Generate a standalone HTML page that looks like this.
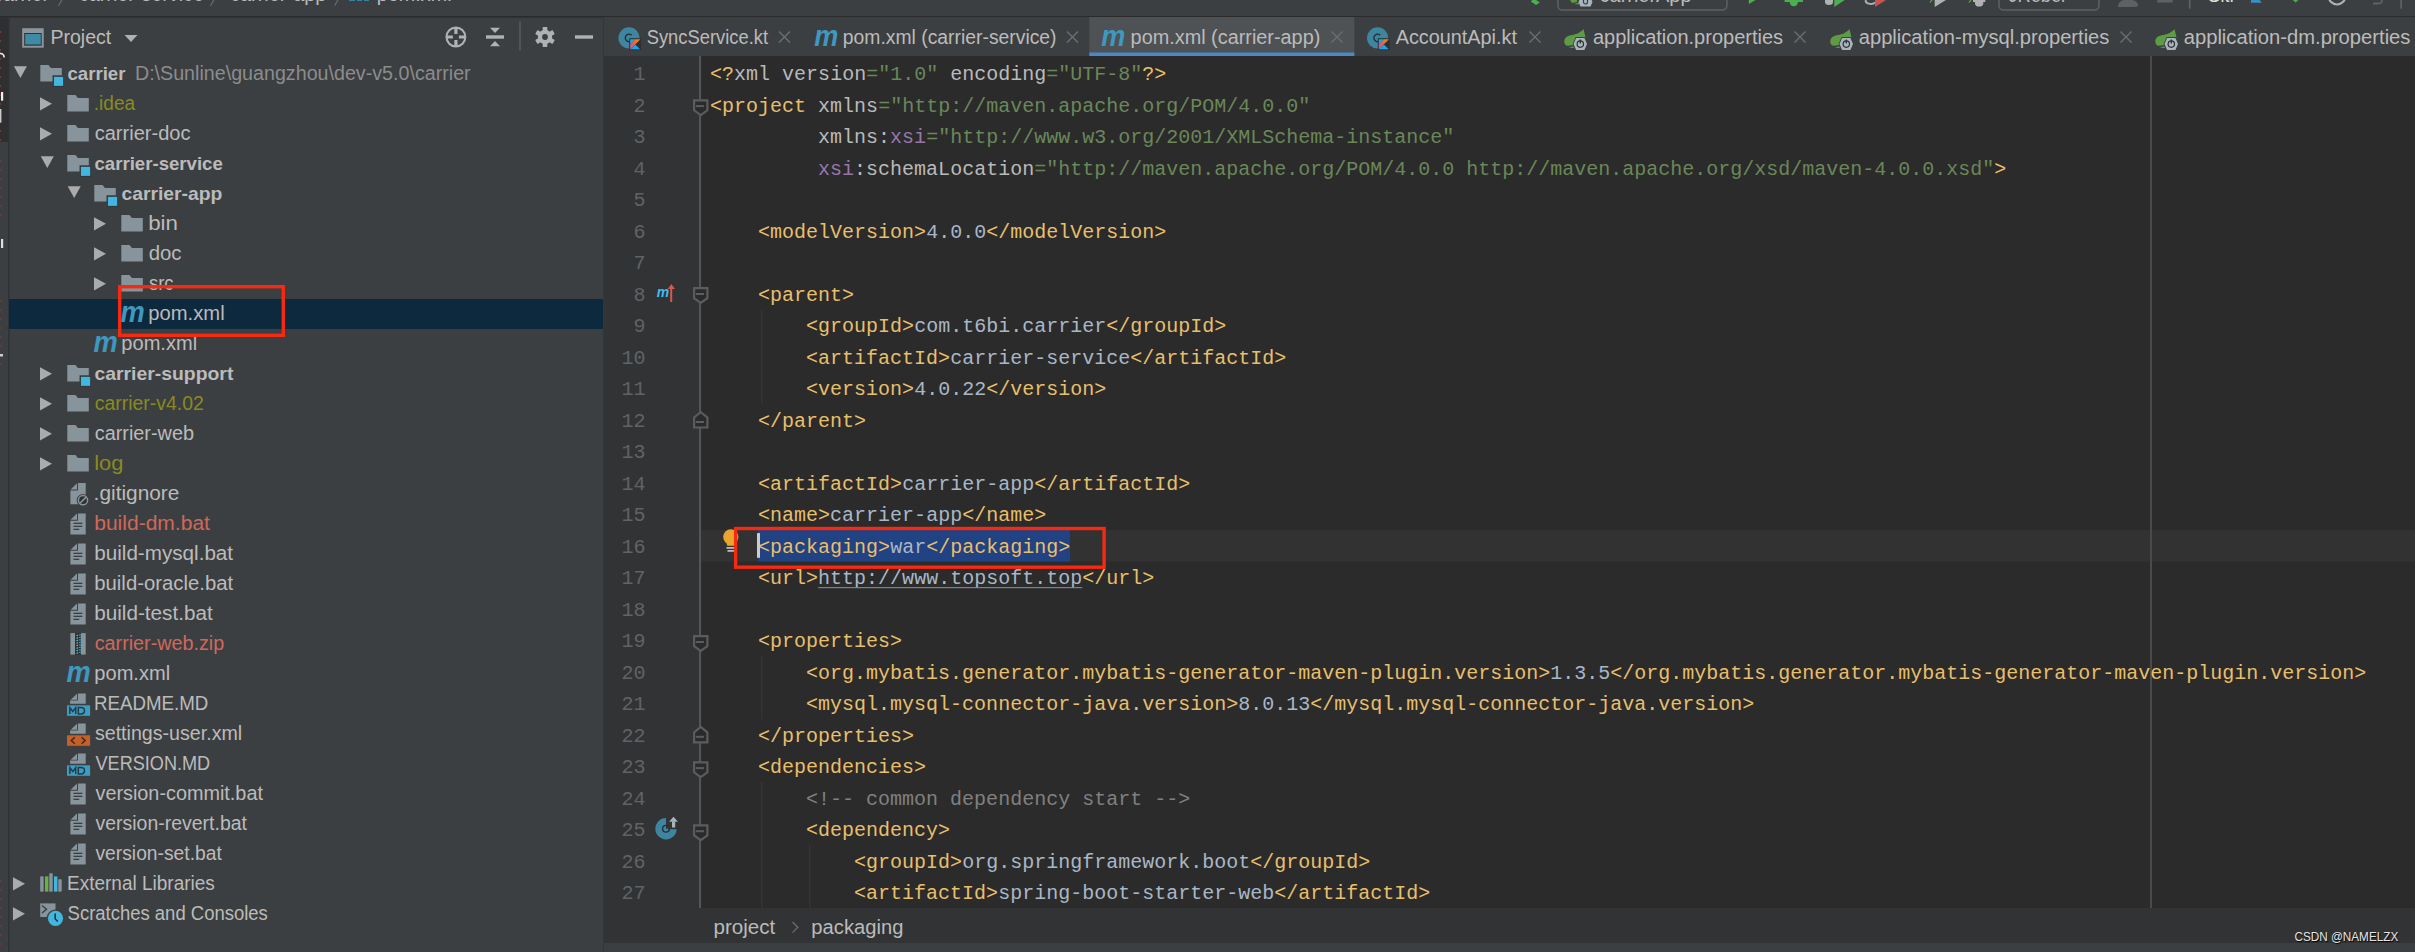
<!DOCTYPE html><html><head><meta charset="utf-8"><title>pom.xml - IntelliJ</title><style>html,body{margin:0;padding:0;width:2415px;height:952px;overflow:hidden;background:#3C3F41;font-family:"Liberation Sans",sans-serif}text{white-space:pre}</style></head><body><svg width="2415" height="952" viewBox="0 0 2415 952" style="position:absolute;left:0;top:0;display:block"><rect x="0" y="0" width="2415" height="952" fill="#3C3F41" />
<rect x="0" y="16" width="2415" height="1.6" fill="#2B2B2B" />
<rect x="0" y="17" width="8.5" height="125" fill="#2D2F31" />
<rect x="8.2" y="17" width="1.3" height="935" fill="#2F3133" />
<rect x="0" y="31" width="1.2" height="2" fill="#743838" />
<rect x="0" y="40" width="1.2" height="2" fill="#743838" />
<rect x="0" y="49" width="1.2" height="2" fill="#743838" />
<rect x="0" y="58" width="1.2" height="2" fill="#743838" />
<rect x="0" y="67" width="1.2" height="2" fill="#743838" />
<rect x="0" y="76" width="1.2" height="2" fill="#743838" />
<rect x="0" y="85" width="1.2" height="2" fill="#743838" />
<rect x="0" y="94" width="1.2" height="2" fill="#743838" />
<rect x="0" y="103" width="1.2" height="2" fill="#743838" />
<rect x="0" y="112" width="1.2" height="2" fill="#743838" />
<rect x="0" y="121" width="1.2" height="2" fill="#743838" />
<rect x="0" y="130" width="1.2" height="2" fill="#743838" />
<rect x="0" y="139" width="1.2" height="2" fill="#743838" />
<rect x="0" y="160" width="1.2" height="2" fill="#6A3C3C" />
<rect x="0" y="169" width="1.2" height="2" fill="#6A3C3C" />
<rect x="0" y="178" width="1.2" height="2" fill="#6A3C3C" />
<rect x="0" y="187" width="1.2" height="2" fill="#6A3C3C" />
<rect x="0" y="196" width="1.2" height="2" fill="#6A3C3C" />
<rect x="0" y="205" width="1.2" height="2" fill="#6A3C3C" />
<rect x="0" y="214" width="1.2" height="2" fill="#6A3C3C" />
<rect x="0" y="300" width="1.2" height="2" fill="#6A3C3C" />
<rect x="0" y="309" width="1.2" height="2" fill="#6A3C3C" />
<rect x="0" y="318" width="1.2" height="2" fill="#6A3C3C" />
<rect x="0" y="327" width="1.2" height="2" fill="#6A3C3C" />
<rect x="0" y="336" width="1.2" height="2" fill="#6A3C3C" />
<rect x="0" y="345" width="1.2" height="2" fill="#6A3C3C" />
<rect x="0" y="354" width="1.2" height="2" fill="#6A3C3C" />
<rect x="0" y="363" width="1.2" height="2" fill="#6A3C3C" />
<rect x="0" y="880" width="1.2" height="2" fill="#6A3C3C" />
<rect x="0" y="889" width="1.2" height="2" fill="#6A3C3C" />
<rect x="0" y="898" width="1.2" height="2" fill="#6A3C3C" />
<rect x="0" y="907" width="1.2" height="2" fill="#6A3C3C" />
<rect x="0" y="916" width="1.2" height="2" fill="#6A3C3C" />
<rect x="0" y="925" width="1.2" height="2" fill="#6A3C3C" />
<rect x="0" y="934" width="1.2" height="2" fill="#6A3C3C" />
<rect x="0" y="943" width="1.2" height="2" fill="#6A3C3C" />
<path d="M0,53.5 A3.5,3.5 0 0 1 4,57.5" stroke="#EEEEEE" stroke-width="1.6" fill="none"/>
<rect x="1" y="92" width="2.2" height="8.7" fill="#EEEEEE" />
<rect x="0" y="109" width="1.4" height="13.6" fill="#CCCCCC" />
<rect x="1" y="239" width="2.2" height="9" fill="#DDDDDD" />
<rect x="0" y="354" width="3" height="2.5" fill="#CCCCCC" />
<rect x="603" y="17" width="1" height="935" fill="#343638" />
<text x="-6.79" y="1.0" font-family="Liberation Sans" font-size="19.6" font-weight="normal" font-style="normal" fill="#BBBBBB" textLength="55.75" lengthAdjust="spacingAndGlyphs" >carrier</text>
<text x="78.91" y="1.0" font-family="Liberation Sans" font-size="19.6" font-weight="normal" font-style="normal" fill="#BBBBBB" textLength="124.95" lengthAdjust="spacingAndGlyphs" >carrier-service</text>
<text x="229.90" y="1.0" font-family="Liberation Sans" font-size="19.6" font-weight="normal" font-style="normal" fill="#BBBBBB" textLength="96.59" lengthAdjust="spacingAndGlyphs" >carrier-app</text>
<text x="376.81" y="1.0" font-family="Liberation Sans" font-size="19.6" font-weight="normal" font-style="normal" fill="#BBBBBB" textLength="74.74" lengthAdjust="spacingAndGlyphs" >pom.xml</text>
<line x1="62" y1="0" x2="58.5" y2="5.7" stroke="#6B6E70" stroke-width="1.2"/>
<line x1="214" y1="0" x2="210.5" y2="5.7" stroke="#6B6E70" stroke-width="1.2"/>
<line x1="338" y1="0" x2="334.5" y2="5.7" stroke="#6B6E70" stroke-width="1.2"/>
<rect x="349" y="0" width="6" height="0.9" fill="#3A8AB0" />
<rect x="357" y="0" width="5" height="0.9" fill="#3A8AB0" />
<rect x="364" y="0" width="5" height="0.9" fill="#3A8AB0" />
<rect x="22.2" y="28.2" width="21.5" height="19.5" fill="#8D969D"/><rect x="24.2" y="33" width="17.5" height="12.7" fill="#2F3133"/><rect x="25.2" y="34" width="15.6" height="10.5" fill="#3F8AA6"/>
<text x="50.44" y="44" font-family="Liberation Sans" font-size="19.6" font-weight="normal" font-style="normal" fill="#BBBBBB" textLength="60.80" lengthAdjust="spacingAndGlyphs" >Project</text>
<path d="M124.6,35.1 H137.5 L131,42.1 Z" fill="#AFB1B3"/>
<circle cx="455.9" cy="37" r="9.4" fill="none" stroke="#AFB1B3" stroke-width="2.1"/><path d="M455.9,27.6 V34 M455.9,40 V46.4 M446.5,37 H452.9 M458.9,37 H465.3" stroke="#AFB1B3" stroke-width="3.2"/>
<rect x="486" y="35.3" width="18" height="3.4" fill="#AFB1B3"/><path d="M490,27.8 H500 L495,33 Z M490,46.2 H500 L495,41 Z" fill="#AFB1B3"/>
<rect x="519" y="21" width="2" height="30" fill="#505254" />
<g transform="translate(545,37)" fill="#AFB1B3"><rect x="-2.3" y="-10" width="4.6" height="5" rx="0.6" transform="rotate(0)"/><rect x="-2.3" y="-10" width="4.6" height="5" rx="0.6" transform="rotate(60)"/><rect x="-2.3" y="-10" width="4.6" height="5" rx="0.6" transform="rotate(120)"/><rect x="-2.3" y="-10" width="4.6" height="5" rx="0.6" transform="rotate(180)"/><rect x="-2.3" y="-10" width="4.6" height="5" rx="0.6" transform="rotate(240)"/><rect x="-2.3" y="-10" width="4.6" height="5" rx="0.6" transform="rotate(300)"/><circle r="7.2"/></g><circle cx="545" cy="37" r="2.9" fill="#3C3F41"/>
<rect x="575" y="35.3" width="18" height="3.4" fill="#AFB1B3" />
<rect x="9" y="299" width="594" height="30" fill="#0D293E" />
<path d="M13.9,66.3 h13 l-6.5,11.6 Z" fill="#ABABAB"/>
<path d="M40.3,65 h8.2 l2.4,3 h10.9 v7.2 h-9.3 v6.3 h-12.2 Z" fill="#88949B"/>
<rect x="53.199999999999996" y="76.1" width="10.7" height="10.5" fill="#2E3133" />
<rect x="53.9" y="76.8" width="9.3" height="9.1" fill="#40B6E0" />
<text x="67.45" y="80" font-family="Liberation Sans" font-size="19.0" font-weight="bold" font-style="normal" fill="#BBBBBB" textLength="58.00" lengthAdjust="spacingAndGlyphs" >carrier</text>
<text x="134.93" y="80" font-family="Liberation Sans" font-size="19.6" font-weight="normal" font-style="normal" fill="#8C8C8C" textLength="335.75" lengthAdjust="spacingAndGlyphs" >D:\Sunline\guangzhou\dev-v5.0\carrier</text>
<path d="M40,97.2 l12,6.6 l-12,6.6 Z" fill="#ABABAB"/>
<path d="M67.3,95 h8.2 l2.4,3 h10.9 v13.5 h-21.5 Z" fill="#88949B"/>
<text x="93.79" y="110" font-family="Liberation Sans" font-size="19.6" font-weight="normal" font-style="normal" fill="#8A8A1E" textLength="41.28" lengthAdjust="spacingAndGlyphs" >.idea</text>
<path d="M40,127.2 l12,6.6 l-12,6.6 Z" fill="#ABABAB"/>
<path d="M67.3,125 h8.2 l2.4,3 h10.9 v13.5 h-21.5 Z" fill="#88949B"/>
<text x="94.70" y="140" font-family="Liberation Sans" font-size="19.6" font-weight="normal" font-style="normal" fill="#BBBBBB" textLength="95.87" lengthAdjust="spacingAndGlyphs" >carrier-doc</text>
<path d="M40.8,156.3 h13 l-6.5,11.6 Z" fill="#ABABAB"/>
<path d="M67.3,155 h8.2 l2.4,3 h10.9 v7.2 h-9.3 v6.3 h-12.2 Z" fill="#88949B"/>
<rect x="80.2" y="166.1" width="10.7" height="10.5" fill="#2E3133" />
<rect x="80.89999999999999" y="166.8" width="9.3" height="9.1" fill="#40B6E0" />
<text x="94.46" y="170" font-family="Liberation Sans" font-size="19.0" font-weight="bold" font-style="normal" fill="#BBBBBB" textLength="128.38" lengthAdjust="spacingAndGlyphs" >carrier-service</text>
<path d="M67.7,186.3 h13 l-6.5,11.6 Z" fill="#ABABAB"/>
<path d="M94.3,185 h8.2 l2.4,3 h10.9 v7.2 h-9.3 v6.3 h-12.2 Z" fill="#88949B"/>
<rect x="107.2" y="196.1" width="10.7" height="10.5" fill="#2E3133" />
<rect x="107.89999999999999" y="196.8" width="9.3" height="9.1" fill="#40B6E0" />
<text x="121.43" y="200" font-family="Liberation Sans" font-size="19.0" font-weight="bold" font-style="normal" fill="#BBBBBB" textLength="100.93" lengthAdjust="spacingAndGlyphs" >carrier-app</text>
<path d="M94,217.2 l12,6.6 l-12,6.6 Z" fill="#ABABAB"/>
<path d="M121.3,215 h8.2 l2.4,3 h10.9 v13.5 h-21.5 Z" fill="#88949B"/>
<text x="148.16" y="230" font-family="Liberation Sans" font-size="19.6" font-weight="normal" font-style="normal" fill="#BBBBBB" textLength="29.78" lengthAdjust="spacingAndGlyphs" >bin</text>
<path d="M94,247.2 l12,6.6 l-12,6.6 Z" fill="#ABABAB"/>
<path d="M121.3,245 h8.2 l2.4,3 h10.9 v13.5 h-21.5 Z" fill="#88949B"/>
<text x="148.68" y="260" font-family="Liberation Sans" font-size="19.6" font-weight="normal" font-style="normal" fill="#BBBBBB" textLength="32.87" lengthAdjust="spacingAndGlyphs" >doc</text>
<path d="M94,277.2 l12,6.6 l-12,6.6 Z" fill="#ABABAB"/>
<path d="M121.3,275 h8.2 l2.4,3 h10.9 v13.5 h-21.5 Z" fill="#88949B"/>
<text x="148.94" y="290" font-family="Liberation Sans" font-size="19.6" font-weight="normal" font-style="normal" fill="#BBBBBB" textLength="24.67" lengthAdjust="spacingAndGlyphs" >src</text>
<text transform="translate(121.00,322.00) scale(0.943,1)" x="-0.58" y="0" font-family="Liberation Sans" font-weight="bold" font-style="italic" font-size="28.89" fill="#3E98C0">m</text>
<text x="148.29" y="320" font-family="Liberation Sans" font-size="19.6" font-weight="normal" font-style="normal" fill="#BBBBBB" textLength="76.39" lengthAdjust="spacingAndGlyphs" >pom.xml</text>
<text transform="translate(94.00,352.00) scale(0.943,1)" x="-0.58" y="0" font-family="Liberation Sans" font-weight="bold" font-style="italic" font-size="28.89" fill="#3E98C0">m</text>
<text x="121.30" y="350" font-family="Liberation Sans" font-size="19.6" font-weight="normal" font-style="normal" fill="#BBBBBB" textLength="75.87" lengthAdjust="spacingAndGlyphs" >pom.xml</text>
<path d="M40,367.2 l12,6.6 l-12,6.6 Z" fill="#ABABAB"/>
<path d="M67.3,365 h8.2 l2.4,3 h10.9 v7.2 h-9.3 v6.3 h-12.2 Z" fill="#88949B"/>
<rect x="80.2" y="376.1" width="10.7" height="10.5" fill="#2E3133" />
<rect x="80.89999999999999" y="376.8" width="9.3" height="9.1" fill="#40B6E0" />
<text x="94.42" y="380" font-family="Liberation Sans" font-size="19.0" font-weight="bold" font-style="normal" fill="#BBBBBB" textLength="138.93" lengthAdjust="spacingAndGlyphs" >carrier-support</text>
<path d="M40,397.2 l12,6.6 l-12,6.6 Z" fill="#ABABAB"/>
<path d="M67.3,395 h8.2 l2.4,3 h10.9 v13.5 h-21.5 Z" fill="#88949B"/>
<text x="94.72" y="410" font-family="Liberation Sans" font-size="19.6" font-weight="normal" font-style="normal" fill="#8A8A1E" textLength="109.10" lengthAdjust="spacingAndGlyphs" >carrier-v4.02</text>
<path d="M40,427.2 l12,6.6 l-12,6.6 Z" fill="#ABABAB"/>
<path d="M67.3,425 h8.2 l2.4,3 h10.9 v13.5 h-21.5 Z" fill="#88949B"/>
<text x="94.71" y="440" font-family="Liberation Sans" font-size="19.6" font-weight="normal" font-style="normal" fill="#BBBBBB" textLength="99.30" lengthAdjust="spacingAndGlyphs" >carrier-web</text>
<path d="M40,457.2 l12,6.6 l-12,6.6 Z" fill="#ABABAB"/>
<path d="M67.3,455 h8.2 l2.4,3 h10.9 v13.5 h-21.5 Z" fill="#88949B"/>
<text x="94.19" y="470" font-family="Liberation Sans" font-size="19.6" font-weight="normal" font-style="normal" fill="#8A8A1E" textLength="29.22" lengthAdjust="spacingAndGlyphs" >log</text>
<path d="M77.99999999999999,483.1 h7.7 v21.1 h-15.3 v-13.700000000000001 h7.6 Z" fill="#88949B"/>
<path d="M70.6,489.5 L76.99999999999999,483.20000000000005 V489.5 Z" fill="#88949B"/>
<circle cx="83.0" cy="500.2" r="6.3" fill="#3C3F41"/><circle cx="83.0" cy="500.2" r="4.6" fill="#2E3032" stroke="#88949B" stroke-width="1.5"/><path d="M79.89999999999999,503.3 L86.1,497.1" stroke="#88949B" stroke-width="1.6"/>
<text x="93.62" y="500" font-family="Liberation Sans" font-size="19.6" font-weight="normal" font-style="normal" fill="#BBBBBB" textLength="85.78" lengthAdjust="spacingAndGlyphs" >.gitignore</text>
<path d="M77.99999999999999,513.4 h7.7 v21.1 h-15.3 v-13.700000000000001 h7.6 Z" fill="#88949B"/>
<path d="M70.6,519.8 L76.99999999999999,513.5 V519.8 Z" fill="#88949B"/>
<rect x="73.49999999999999" y="522.6999999999999" width="8.9" height="1.3" fill="#3C3F41" />
<rect x="73.49999999999999" y="525.6999999999999" width="8.9" height="1.3" fill="#3C3F41" />
<rect x="73.49999999999999" y="528.6999999999999" width="5.7" height="1.3" fill="#3C3F41" />
<text x="94.24" y="530" font-family="Liberation Sans" font-size="19.6" font-weight="normal" font-style="normal" fill="#D1675A" textLength="115.72" lengthAdjust="spacingAndGlyphs" >build-dm.bat</text>
<path d="M77.99999999999999,543.4 h7.7 v21.1 h-15.3 v-13.700000000000001 h7.6 Z" fill="#88949B"/>
<path d="M70.6,549.8 L76.99999999999999,543.5 V549.8 Z" fill="#88949B"/>
<rect x="73.49999999999999" y="552.6999999999999" width="8.9" height="1.3" fill="#3C3F41" />
<rect x="73.49999999999999" y="555.6999999999999" width="8.9" height="1.3" fill="#3C3F41" />
<rect x="73.49999999999999" y="558.6999999999999" width="5.7" height="1.3" fill="#3C3F41" />
<text x="94.26" y="560" font-family="Liberation Sans" font-size="19.6" font-weight="normal" font-style="normal" fill="#BBBBBB" textLength="138.84" lengthAdjust="spacingAndGlyphs" >build-mysql.bat</text>
<path d="M77.99999999999999,573.4 h7.7 v21.1 h-15.3 v-13.700000000000001 h7.6 Z" fill="#88949B"/>
<path d="M70.6,579.8 L76.99999999999999,573.5 V579.8 Z" fill="#88949B"/>
<rect x="73.49999999999999" y="582.6999999999999" width="8.9" height="1.3" fill="#3C3F41" />
<rect x="73.49999999999999" y="585.6999999999999" width="8.9" height="1.3" fill="#3C3F41" />
<rect x="73.49999999999999" y="588.6999999999999" width="5.7" height="1.3" fill="#3C3F41" />
<text x="94.28" y="590" font-family="Liberation Sans" font-size="19.6" font-weight="normal" font-style="normal" fill="#BBBBBB" textLength="138.86" lengthAdjust="spacingAndGlyphs" >build-oracle.bat</text>
<path d="M77.99999999999999,603.4 h7.7 v21.1 h-15.3 v-13.700000000000001 h7.6 Z" fill="#88949B"/>
<path d="M70.6,609.8 L76.99999999999999,603.5 V609.8 Z" fill="#88949B"/>
<rect x="73.49999999999999" y="612.6999999999999" width="8.9" height="1.3" fill="#3C3F41" />
<rect x="73.49999999999999" y="615.6999999999999" width="8.9" height="1.3" fill="#3C3F41" />
<rect x="73.49999999999999" y="618.6999999999999" width="5.7" height="1.3" fill="#3C3F41" />
<text x="94.26" y="620" font-family="Liberation Sans" font-size="19.6" font-weight="normal" font-style="normal" fill="#BBBBBB" textLength="118.45" lengthAdjust="spacingAndGlyphs" >build-test.bat</text>
<rect x="70.39999999999999" y="633.1" width="4.7" height="21.5" fill="#88949B" />
<rect x="80.99999999999999" y="633.1" width="4.7" height="21.5" fill="#88949B" />
<rect x="75.1" y="633.1" width="5.9" height="21.5" fill="#2E3133" />
<path d="M75.6,635.8000000000001 L77.99999999999999,634.6 L77.99999999999999,636.2 Z M78.39999999999999,635.0 L80.6,634.0 L80.6,635.7 Z" fill="#40B6E0"/>
<path d="M75.6,638.3000000000001 L77.99999999999999,637.1 L77.99999999999999,638.7 Z M78.39999999999999,637.5 L80.6,636.5 L80.6,638.2 Z" fill="#40B6E0"/>
<path d="M75.6,640.8000000000001 L77.99999999999999,639.6 L77.99999999999999,641.2 Z M78.39999999999999,640.0 L80.6,639.0 L80.6,640.7 Z" fill="#40B6E0"/>
<path d="M75.6,643.3000000000001 L77.99999999999999,642.1 L77.99999999999999,643.7 Z M78.39999999999999,642.5 L80.6,641.5 L80.6,643.2 Z" fill="#40B6E0"/>
<path d="M75.6,645.8000000000001 L77.99999999999999,644.6 L77.99999999999999,646.2 Z M78.39999999999999,645.0 L80.6,644.0 L80.6,645.7 Z" fill="#40B6E0"/>
<path d="M75.6,648.3000000000001 L77.99999999999999,647.1 L77.99999999999999,648.7 Z M78.39999999999999,647.5 L80.6,646.5 L80.6,648.2 Z" fill="#40B6E0"/>
<path d="M75.6,650.8000000000001 L77.99999999999999,649.6 L77.99999999999999,651.2 Z M78.39999999999999,650.0 L80.6,649.0 L80.6,650.7 Z" fill="#40B6E0"/>
<path d="M75.6,653.3000000000001 L77.99999999999999,652.1 L77.99999999999999,653.7 Z M78.39999999999999,652.5 L80.6,651.5 L80.6,653.2 Z" fill="#40B6E0"/>
<text x="94.71" y="650" font-family="Liberation Sans" font-size="19.6" font-weight="normal" font-style="normal" fill="#D1675A" textLength="129.52" lengthAdjust="spacingAndGlyphs" >carrier-web.zip</text>
<text transform="translate(67.00,682.00) scale(0.943,1)" x="-0.58" y="0" font-family="Liberation Sans" font-weight="bold" font-style="italic" font-size="28.89" fill="#3E98C0">m</text>
<text x="94.30" y="680" font-family="Liberation Sans" font-size="19.6" font-weight="normal" font-style="normal" fill="#BBBBBB" textLength="75.87" lengthAdjust="spacingAndGlyphs" >pom.xml</text>
<path d="M77.89999999999999,693.4 h7.8 v10.3 h-15.6 v-3.1 h7.8 Z" fill="#88949B"/><path d="M70.69999999999999,699.6999999999999 L77.0,693.6999999999999 V699.6999999999999 Z" fill="#88949B"/>
<rect x="67.0" y="705.3" width="23.1" height="10.5" fill="#3D9CC4" />
<path d="M69.89999999999999,713.9 V707.6 L72.8,711.4 L75.7,707.6 V713.9 M78.3,713.9 V707.6 H80.8 Q84.5,707.6 84.5,710.75 Q84.5,713.9 80.8,713.9 Z" stroke="#263A45" stroke-width="1.5" fill="none"/>
<text x="94.00" y="710" font-family="Liberation Sans" font-size="19.6" font-weight="normal" font-style="normal" fill="#BBBBBB" textLength="114.37" lengthAdjust="spacingAndGlyphs" >README.MD</text>
<path d="M77.89999999999999,723.4 h7.8 v10.3 h-15.6 v-3.1 h7.8 Z" fill="#88949B"/><path d="M70.69999999999999,729.6999999999999 L77.0,723.6999999999999 V729.6999999999999 Z" fill="#88949B"/>
<rect x="67.0" y="735.3" width="23.1" height="10.5" fill="#C65F28" />
<path d="M74.8,737.1999999999999 L71.3,740.5 L74.8,743.8 M81.6,737.1999999999999 L85.1,740.5 L81.6,743.8" stroke="#3A2A22" stroke-width="1.5" fill="none"/>
<text x="94.91" y="740" font-family="Liberation Sans" font-size="19.6" font-weight="normal" font-style="normal" fill="#BBBBBB" textLength="147.31" lengthAdjust="spacingAndGlyphs" >settings-user.xml</text>
<path d="M77.89999999999999,753.4 h7.8 v10.3 h-15.6 v-3.1 h7.8 Z" fill="#88949B"/><path d="M70.69999999999999,759.6999999999999 L77.0,753.6999999999999 V759.6999999999999 Z" fill="#88949B"/>
<rect x="67.0" y="765.3" width="23.1" height="10.5" fill="#3D9CC4" />
<path d="M69.89999999999999,773.9 V767.6 L72.8,771.4 L75.7,767.6 V773.9 M78.3,773.9 V767.6 H80.8 Q84.5,767.6 84.5,770.75 Q84.5,773.9 80.8,773.9 Z" stroke="#263A45" stroke-width="1.5" fill="none"/>
<text x="95.50" y="770" font-family="Liberation Sans" font-size="19.6" font-weight="normal" font-style="normal" fill="#BBBBBB" textLength="114.70" lengthAdjust="spacingAndGlyphs" >VERSION.MD</text>
<path d="M77.99999999999999,783.4 h7.7 v21.1 h-15.3 v-13.700000000000001 h7.6 Z" fill="#88949B"/>
<path d="M70.6,789.8 L76.99999999999999,783.5 V789.8 Z" fill="#88949B"/>
<rect x="73.49999999999999" y="792.6999999999999" width="8.9" height="1.3" fill="#3C3F41" />
<rect x="73.49999999999999" y="795.6999999999999" width="8.9" height="1.3" fill="#3C3F41" />
<rect x="73.49999999999999" y="798.6999999999999" width="5.7" height="1.3" fill="#3C3F41" />
<text x="95.50" y="800" font-family="Liberation Sans" font-size="19.6" font-weight="normal" font-style="normal" fill="#BBBBBB" textLength="167.42" lengthAdjust="spacingAndGlyphs" >version-commit.bat</text>
<path d="M77.99999999999999,813.4 h7.7 v21.1 h-15.3 v-13.700000000000001 h7.6 Z" fill="#88949B"/>
<path d="M70.6,819.8 L76.99999999999999,813.5 V819.8 Z" fill="#88949B"/>
<rect x="73.49999999999999" y="822.6999999999999" width="8.9" height="1.3" fill="#3C3F41" />
<rect x="73.49999999999999" y="825.6999999999999" width="8.9" height="1.3" fill="#3C3F41" />
<rect x="73.49999999999999" y="828.6999999999999" width="5.7" height="1.3" fill="#3C3F41" />
<text x="95.50" y="830" font-family="Liberation Sans" font-size="19.6" font-weight="normal" font-style="normal" fill="#BBBBBB" textLength="151.50" lengthAdjust="spacingAndGlyphs" >version-revert.bat</text>
<path d="M77.99999999999999,843.4 h7.7 v21.1 h-15.3 v-13.700000000000001 h7.6 Z" fill="#88949B"/>
<path d="M70.6,849.8 L76.99999999999999,843.5 V849.8 Z" fill="#88949B"/>
<rect x="73.49999999999999" y="852.6999999999999" width="8.9" height="1.3" fill="#3C3F41" />
<rect x="73.49999999999999" y="855.6999999999999" width="8.9" height="1.3" fill="#3C3F41" />
<rect x="73.49999999999999" y="858.6999999999999" width="5.7" height="1.3" fill="#3C3F41" />
<text x="95.50" y="860" font-family="Liberation Sans" font-size="19.6" font-weight="normal" font-style="normal" fill="#BBBBBB" textLength="126.26" lengthAdjust="spacingAndGlyphs" >version-set.bat</text>
<path d="M13,877.2 l12,6.6 l-12,6.6 Z" fill="#ABABAB"/>
<rect x="40.2" y="876.4" width="3.4" height="15.200000000000045" fill="#88949B" />
<rect x="45" y="876.4" width="3.4" height="15.200000000000045" fill="#62B543" />
<rect x="49.3" y="873.3" width="3.4" height="18.300000000000068" fill="#88949B" />
<rect x="54" y="876.4" width="3.4" height="15.200000000000045" fill="#40B6E0" />
<rect x="58.3" y="879.3" width="3.4" height="12.300000000000068" fill="#88949B" />
<text x="66.98" y="890" font-family="Liberation Sans" font-size="19.6" font-weight="normal" font-style="normal" fill="#BBBBBB" textLength="147.91" lengthAdjust="spacingAndGlyphs" >External Libraries</text>
<path d="M13,907.2 l12,6.6 l-12,6.6 Z" fill="#ABABAB"/>
<rect x="40.2" y="903.4" width="15.3" height="13.6" fill="#88949B" />
<path d="M42,905.5 L46.5,909.2 L42,913" stroke="#3C3F41" stroke-width="1.4" fill="none"/>
<circle cx="55.5" cy="918.3" r="8.8" fill="#3C3F41"/><circle cx="55.5" cy="918.3" r="7.6" fill="#40B6E0"/><path d="M55.2,913.5 V919 L57.8,921.5" stroke="#2B2B2B" stroke-width="1.5" fill="none"/>
<text x="67.58" y="920" font-family="Liberation Sans" font-size="19.6" font-weight="normal" font-style="normal" fill="#BBBBBB" textLength="200.25" lengthAdjust="spacingAndGlyphs" >Scratches and Consoles</text>
<rect x="119.7" y="286.7" width="163.6" height="48.6" fill="none" stroke="#F52A10" stroke-width="3.4"/>
<rect x="604" y="17" width="1811" height="39" fill="#3C3F41" />
<rect x="1089.3" y="17" width="265" height="39" fill="#4E5254" />
<rect x="1089.3" y="52.5" width="265" height="3.5" fill="#4A88C7" />
<defs><linearGradient id="kgr" x1="1" y1="0" x2="0" y2="1"><stop offset="0" stop-color="#FF8A00"/><stop offset="0.55" stop-color="#E8604A"/><stop offset="1" stop-color="#C757BC"/></linearGradient></defs>
<circle cx="629" cy="37.9" r="10.6" fill="#3E86A0"/><path d="M631.7,35.199999999999996 A3.8,3.8 0 1 0 630,41.6" stroke="#22313A" stroke-width="1.4" fill="none"/>
<rect x="629.2" y="38.199999999999996" width="12" height="12" fill="#2E3133" />
<path d="M630.2,39.199999999999996 h5.2 l-5.2,5.2 Z" fill="#12A9F2"/><path d="M635.4000000000001,39.199999999999996 h5 l-10.2,10.2 v-5 Z" fill="url(#kgr)"/><path d="M630.5,49.199999999999996 L635.3000000000001,44.4 L640.1,49.199999999999996 Z" fill="#12A9F2"/>
<text x="646.68" y="44" font-family="Liberation Sans" font-size="19.6" font-weight="normal" font-style="normal" fill="#BBBBBB" textLength="121.38" lengthAdjust="spacingAndGlyphs" >SyncService.kt</text>
<path d="M779,31.6 l11,11 M790,31.6 l-11,11" stroke="#6B6E70" stroke-width="1.4"/>
<text transform="translate(814.80,45.70) scale(0.932,1)" x="-0.58" y="0" font-family="Liberation Sans" font-weight="bold" font-style="italic" font-size="29.07" fill="#3E98C0">m</text>
<text x="842.84" y="44" font-family="Liberation Sans" font-size="19.6" font-weight="normal" font-style="normal" fill="#BBBBBB" textLength="213.73" lengthAdjust="spacingAndGlyphs" >pom.xml (carrier-service)</text>
<path d="M1067,31.6 l11,11 M1078,31.6 l-11,11" stroke="#6B6E70" stroke-width="1.4"/>
<text transform="translate(1101.70,45.70) scale(0.932,1)" x="-0.58" y="0" font-family="Liberation Sans" font-weight="bold" font-style="italic" font-size="29.07" fill="#3E98C0">m</text>
<text x="1130.61" y="44" font-family="Liberation Sans" font-size="19.6" font-weight="normal" font-style="normal" fill="#BBBBBB" textLength="189.71" lengthAdjust="spacingAndGlyphs" >pom.xml (carrier-app)</text>
<path d="M1331.5,31.6 l11,11 M1342.5,31.6 l-11,11" stroke="#6B6E70" stroke-width="1.4"/>
<circle cx="1377.6" cy="37.9" r="10.6" fill="#3E86A0"/><path d="M1380.3,35.199999999999996 A3.8,3.8 0 1 0 1378.6,41.6" stroke="#22313A" stroke-width="1.4" fill="none"/>
<rect x="1377.8" y="38.199999999999996" width="12" height="12" fill="#2E3133" />
<path d="M1378.8,39.199999999999996 h5.2 l-5.2,5.2 Z" fill="#12A9F2"/><path d="M1384.0,39.199999999999996 h5 l-10.2,10.2 v-5 Z" fill="url(#kgr)"/><path d="M1379.1,49.199999999999996 L1383.8999999999999,44.4 L1388.7,49.199999999999996 Z" fill="#12A9F2"/>
<text x="1395.70" y="44" font-family="Liberation Sans" font-size="19.6" font-weight="normal" font-style="normal" fill="#BBBBBB" textLength="121.28" lengthAdjust="spacingAndGlyphs" >AccountApi.kt</text>
<path d="M1529.5,31.6 l11,11 M1540.5,31.6 l-11,11" stroke="#6B6E70" stroke-width="1.4"/>
<path d="M1583.5,28.9 C1580,33 1576,34.5 1570.5,35.2 C1566,36 1564.2,39 1564.3,41.8 C1564.4,44.5 1566,45.9 1568,45.8 L1573.5,45 L1576,38 L1585.5,37.5 Z" fill="#5E9B45"/><path d="M1568.5,47.8 C1570,47 1572,46.3 1573.8,46.4 L1573.8,47.9 Z" fill="#5E9B45"/>
<path d="M1575.6,37.1 h9.3 l3,6.8 l-3,6.8 h-9.3 l-3,-6.8 Z" fill="#3C3F41"/><path d="M1576.1,37.9 h8.3 l2.6,6 l-2.6,6 h-8.3 l-2.6,-6 Z" fill="#A9B4BD"/><circle cx="1580.3" cy="44.1" r="3.2" fill="none" stroke="#2B3033" stroke-width="1.2"/><path d="M1580.3,39.6 V43.6" stroke="#2B3033" stroke-width="1.3"/>
<text x="1592.90" y="44" font-family="Liberation Sans" font-size="19.6" font-weight="normal" font-style="normal" fill="#BBBBBB" textLength="190.20" lengthAdjust="spacingAndGlyphs" >application.properties</text>
<path d="M1794.5,31.6 l11,11 M1805.5,31.6 l-11,11" stroke="#6B6E70" stroke-width="1.4"/>
<path d="M1849.5,28.9 C1846,33 1842,34.5 1836.5,35.2 C1832,36 1830.2,39 1830.3,41.8 C1830.4,44.5 1832,45.9 1834,45.8 L1839.5,45 L1842,38 L1851.5,37.5 Z" fill="#5E9B45"/><path d="M1834.5,47.8 C1836,47 1838,46.3 1839.8,46.4 L1839.8,47.9 Z" fill="#5E9B45"/>
<path d="M1841.6,37.1 h9.3 l3,6.8 l-3,6.8 h-9.3 l-3,-6.8 Z" fill="#3C3F41"/><path d="M1842.1,37.9 h8.3 l2.6,6 l-2.6,6 h-8.3 l-2.6,-6 Z" fill="#A9B4BD"/><circle cx="1846.3" cy="44.1" r="3.2" fill="none" stroke="#2B3033" stroke-width="1.2"/><path d="M1846.3,39.6 V43.6" stroke="#2B3033" stroke-width="1.3"/>
<text x="1858.79" y="44" font-family="Liberation Sans" font-size="19.6" font-weight="normal" font-style="normal" fill="#BBBBBB" textLength="250.60" lengthAdjust="spacingAndGlyphs" >application-mysql.properties</text>
<path d="M2120.5,31.6 l11,11 M2131.5,31.6 l-11,11" stroke="#6B6E70" stroke-width="1.4"/>
<path d="M2174.5,28.9 C2171,33 2167,34.5 2161.5,35.2 C2157,36 2155.2,39 2155.3,41.8 C2155.4,44.5 2157,45.9 2159,45.8 L2164.5,45 L2167,38 L2176.5,37.5 Z" fill="#5E9B45"/><path d="M2159.5,47.8 C2161,47 2163,46.3 2164.8,46.4 L2164.8,47.9 Z" fill="#5E9B45"/>
<path d="M2166.6,37.1 h9.3 l3,6.8 l-3,6.8 h-9.3 l-3,-6.8 Z" fill="#3C3F41"/><path d="M2167.1,37.9 h8.3 l2.6,6 l-2.6,6 h-8.3 l-2.6,-6 Z" fill="#A9B4BD"/><circle cx="2171.3" cy="44.1" r="3.2" fill="none" stroke="#2B3033" stroke-width="1.2"/><path d="M2171.3,39.6 V43.6" stroke="#2B3033" stroke-width="1.3"/>
<text x="2183.69" y="44" font-family="Liberation Sans" font-size="19.6" font-weight="normal" font-style="normal" fill="#BBBBBB" textLength="226.76" lengthAdjust="spacingAndGlyphs" >application-dm.properties</text>
<rect x="604" y="56" width="1811" height="852" fill="#2B2B2B" />
<rect x="604" y="56" width="95.5" height="852" fill="#313335" />
<rect x="699.5" y="530.0" width="1715.5" height="31.5" fill="#323232" />
<rect x="758.1" y="530.0" width="312" height="31.5" fill="#214283" />
<rect x="2150" y="56" width="2" height="852" fill="#4A4A4A" />
<rect x="761.3" y="309.5" width="1" height="94.5" fill="#3A3A3A" />
<rect x="761.3" y="656.0" width="1" height="63.0" fill="#3A3A3A" />
<rect x="761.3" y="782.0" width="1" height="157.5" fill="#3A3A3A" />
<rect x="809.3" y="845.0" width="1" height="94.5" fill="#3A3A3A" />
<rect x="699" y="56" width="2.1" height="852" fill="#555555" />
<path d="M694.1,100.3 H707.4 V110.3 L700.75,115.10000000000001 L694.1,110.3 Z" fill="#2B2B2B" stroke="#5C5C5C" stroke-width="2.2"/>
<rect x="695.9" y="105.10000000000001" width="8.1" height="2" fill="#5C5C5C" />
<path d="M694.1,288.20000000000005 H707.4 V298.20000000000005 L700.75,303.0 L694.1,298.20000000000005 Z" fill="#2B2B2B" stroke="#5C5C5C" stroke-width="2.2"/>
<rect x="695.9" y="293.0" width="8.1" height="2" fill="#5C5C5C" />
<path d="M694.1,636.2 H707.4 V646.2 L700.75,651.0 L694.1,646.2 Z" fill="#2B2B2B" stroke="#5C5C5C" stroke-width="2.2"/>
<rect x="695.9" y="641.0" width="8.1" height="2" fill="#5C5C5C" />
<path d="M694.1,762.3000000000001 H707.4 V772.3000000000001 L700.75,777.1 L694.1,772.3000000000001 Z" fill="#2B2B2B" stroke="#5C5C5C" stroke-width="2.2"/>
<rect x="695.9" y="767.1" width="8.1" height="2" fill="#5C5C5C" />
<path d="M694.1,825.4 H707.4 V835.4 L700.75,840.1999999999999 L694.1,835.4 Z" fill="#2B2B2B" stroke="#5C5C5C" stroke-width="2.2"/>
<rect x="695.9" y="830.1999999999999" width="8.1" height="2" fill="#5C5C5C" />
<path d="M694.1,427.5 H707.4 V417.5 L700.75,412.20000000000005 L694.1,417.5 Z" fill="#2B2B2B" stroke="#5C5C5C" stroke-width="2.2"/>
<rect x="695.9" y="421.0" width="8.1" height="2" fill="#5C5C5C" />
<path d="M694.1,742.3 H707.4 V732.3 L700.75,727.0 L694.1,732.3 Z" fill="#2B2B2B" stroke="#5C5C5C" stroke-width="2.2"/>
<rect x="695.9" y="735.8" width="8.1" height="2" fill="#5C5C5C" />
<text x="633.50" y="80.20" font-family="Liberation Mono" font-size="20" fill="#606366">1</text>
<text x="633.50" y="111.70" font-family="Liberation Mono" font-size="20" fill="#606366">2</text>
<text x="633.50" y="143.20" font-family="Liberation Mono" font-size="20" fill="#606366">3</text>
<text x="633.50" y="174.70" font-family="Liberation Mono" font-size="20" fill="#606366">4</text>
<text x="633.50" y="206.20" font-family="Liberation Mono" font-size="20" fill="#606366">5</text>
<text x="633.50" y="237.70" font-family="Liberation Mono" font-size="20" fill="#606366">6</text>
<text x="633.50" y="269.20" font-family="Liberation Mono" font-size="20" fill="#606366">7</text>
<text x="633.50" y="300.70" font-family="Liberation Mono" font-size="20" fill="#606366">8</text>
<text x="633.50" y="332.20" font-family="Liberation Mono" font-size="20" fill="#606366">9</text>
<text x="621.50" y="363.70" font-family="Liberation Mono" font-size="20" fill="#606366">10</text>
<text x="621.50" y="395.20" font-family="Liberation Mono" font-size="20" fill="#606366">11</text>
<text x="621.50" y="426.70" font-family="Liberation Mono" font-size="20" fill="#606366">12</text>
<text x="621.50" y="458.20" font-family="Liberation Mono" font-size="20" fill="#606366">13</text>
<text x="621.50" y="489.70" font-family="Liberation Mono" font-size="20" fill="#606366">14</text>
<text x="621.50" y="521.20" font-family="Liberation Mono" font-size="20" fill="#606366">15</text>
<text x="621.50" y="552.70" font-family="Liberation Mono" font-size="20" fill="#606366">16</text>
<text x="621.50" y="584.20" font-family="Liberation Mono" font-size="20" fill="#606366">17</text>
<text x="621.50" y="615.70" font-family="Liberation Mono" font-size="20" fill="#606366">18</text>
<text x="621.50" y="647.20" font-family="Liberation Mono" font-size="20" fill="#606366">19</text>
<text x="621.50" y="678.70" font-family="Liberation Mono" font-size="20" fill="#606366">20</text>
<text x="621.50" y="710.20" font-family="Liberation Mono" font-size="20" fill="#606366">21</text>
<text x="621.50" y="741.70" font-family="Liberation Mono" font-size="20" fill="#606366">22</text>
<text x="621.50" y="773.20" font-family="Liberation Mono" font-size="20" fill="#606366">23</text>
<text x="621.50" y="804.70" font-family="Liberation Mono" font-size="20" fill="#606366">24</text>
<text x="621.50" y="836.20" font-family="Liberation Mono" font-size="20" fill="#606366">25</text>
<text x="621.50" y="867.70" font-family="Liberation Mono" font-size="20" fill="#606366">26</text>
<text x="621.50" y="899.20" font-family="Liberation Mono" font-size="20" fill="#606366">27</text>
<text x="710.10" y="80.20" font-family="Liberation Mono" font-size="20" xml:space="preserve"><tspan fill="#E8BF6A">&lt;?</tspan><tspan fill="#BABABA">xml version</tspan><tspan fill="#6A8759">="1.0"</tspan><tspan fill="#BABABA"> encoding</tspan><tspan fill="#6A8759">="UTF-8"</tspan><tspan fill="#E8BF6A">?&gt;</tspan></text>
<text x="710.10" y="111.70" font-family="Liberation Mono" font-size="20" xml:space="preserve"><tspan fill="#E8BF6A">&lt;project</tspan><tspan fill="#BABABA"> xmlns</tspan><tspan fill="#6A8759">="http://maven.apache.org/POM/4.0.0"</tspan></text>
<text x="818.10" y="143.20" font-family="Liberation Mono" font-size="20" xml:space="preserve"><tspan fill="#BABABA">xmlns:</tspan><tspan fill="#9876AA">xsi</tspan><tspan fill="#6A8759">="http://www.w3.org/2001/XMLSchema-instance"</tspan></text>
<text x="818.10" y="174.70" font-family="Liberation Mono" font-size="20" xml:space="preserve"><tspan fill="#9876AA">xsi</tspan><tspan fill="#BABABA">:schemaLocation</tspan><tspan fill="#6A8759">="http://maven.apache.org/POM/4.0.0 http://maven.apache.org/xsd/maven-4.0.0.xsd"</tspan><tspan fill="#E8BF6A">&gt;</tspan></text>
<text x="758.10" y="237.70" font-family="Liberation Mono" font-size="20" xml:space="preserve"><tspan fill="#E8BF6A">&lt;modelVersion&gt;</tspan><tspan fill="#A9B7C6">4.0.0</tspan><tspan fill="#E8BF6A">&lt;/modelVersion&gt;</tspan></text>
<text x="758.10" y="300.70" font-family="Liberation Mono" font-size="20" xml:space="preserve"><tspan fill="#E8BF6A">&lt;parent&gt;</tspan></text>
<text x="806.10" y="332.20" font-family="Liberation Mono" font-size="20" xml:space="preserve"><tspan fill="#E8BF6A">&lt;groupId&gt;</tspan><tspan fill="#A9B7C6">com.t6bi.carrier</tspan><tspan fill="#E8BF6A">&lt;/groupId&gt;</tspan></text>
<text x="806.10" y="363.70" font-family="Liberation Mono" font-size="20" xml:space="preserve"><tspan fill="#E8BF6A">&lt;artifactId&gt;</tspan><tspan fill="#A9B7C6">carrier-service</tspan><tspan fill="#E8BF6A">&lt;/artifactId&gt;</tspan></text>
<text x="806.10" y="395.20" font-family="Liberation Mono" font-size="20" xml:space="preserve"><tspan fill="#E8BF6A">&lt;version&gt;</tspan><tspan fill="#A9B7C6">4.0.22</tspan><tspan fill="#E8BF6A">&lt;/version&gt;</tspan></text>
<text x="758.10" y="426.70" font-family="Liberation Mono" font-size="20" xml:space="preserve"><tspan fill="#E8BF6A">&lt;/parent&gt;</tspan></text>
<text x="758.10" y="489.70" font-family="Liberation Mono" font-size="20" xml:space="preserve"><tspan fill="#E8BF6A">&lt;artifactId&gt;</tspan><tspan fill="#A9B7C6">carrier-app</tspan><tspan fill="#E8BF6A">&lt;/artifactId&gt;</tspan></text>
<text x="758.10" y="521.20" font-family="Liberation Mono" font-size="20" xml:space="preserve"><tspan fill="#E8BF6A">&lt;name&gt;</tspan><tspan fill="#A9B7C6">carrier-app</tspan><tspan fill="#E8BF6A">&lt;/name&gt;</tspan></text>
<text x="758.10" y="552.70" font-family="Liberation Mono" font-size="20" xml:space="preserve"><tspan fill="#E8BF6A">&lt;packaging&gt;</tspan><tspan fill="#A9B7C6">war</tspan><tspan fill="#E8BF6A">&lt;/packaging&gt;</tspan></text>
<text x="758.10" y="584.20" font-family="Liberation Mono" font-size="20" xml:space="preserve"><tspan fill="#E8BF6A">&lt;url&gt;</tspan><tspan fill="#A9B7C6">http://www.topsoft.top</tspan><tspan fill="#E8BF6A">&lt;/url&gt;</tspan></text>
<text x="758.10" y="647.20" font-family="Liberation Mono" font-size="20" xml:space="preserve"><tspan fill="#E8BF6A">&lt;properties&gt;</tspan></text>
<text x="806.10" y="678.70" font-family="Liberation Mono" font-size="20" xml:space="preserve"><tspan fill="#E8BF6A">&lt;org.mybatis.generator.mybatis-generator-maven-plugin.version&gt;</tspan><tspan fill="#A9B7C6">1.3.5</tspan><tspan fill="#E8BF6A">&lt;/org.mybatis.generator.mybatis-generator-maven-plugin.version&gt;</tspan></text>
<text x="806.10" y="710.20" font-family="Liberation Mono" font-size="20" xml:space="preserve"><tspan fill="#E8BF6A">&lt;mysql.mysql-connector-java.version&gt;</tspan><tspan fill="#A9B7C6">8.0.13</tspan><tspan fill="#E8BF6A">&lt;/mysql.mysql-connector-java.version&gt;</tspan></text>
<text x="758.10" y="741.70" font-family="Liberation Mono" font-size="20" xml:space="preserve"><tspan fill="#E8BF6A">&lt;/properties&gt;</tspan></text>
<text x="758.10" y="773.20" font-family="Liberation Mono" font-size="20" xml:space="preserve"><tspan fill="#E8BF6A">&lt;dependencies&gt;</tspan></text>
<text x="806.10" y="804.70" font-family="Liberation Mono" font-size="20" xml:space="preserve"><tspan fill="#808080">&lt;!-- common dependency start --&gt;</tspan></text>
<text x="806.10" y="836.20" font-family="Liberation Mono" font-size="20" xml:space="preserve"><tspan fill="#E8BF6A">&lt;dependency&gt;</tspan></text>
<text x="854.10" y="867.70" font-family="Liberation Mono" font-size="20" xml:space="preserve"><tspan fill="#E8BF6A">&lt;groupId&gt;</tspan><tspan fill="#A9B7C6">org.springframework.boot</tspan><tspan fill="#E8BF6A">&lt;/groupId&gt;</tspan></text>
<text x="854.10" y="899.20" font-family="Liberation Mono" font-size="20" xml:space="preserve"><tspan fill="#E8BF6A">&lt;artifactId&gt;</tspan><tspan fill="#A9B7C6">spring-boot-starter-web</tspan><tspan fill="#E8BF6A">&lt;/artifactId&gt;</tspan></text>
<rect x="818.1" y="587.1" width="264" height="1.1" fill="#7F8B96" />
<text transform="translate(656.90,297.20) scale(0.898,1)" x="-0.31" y="0" font-family="Liberation Sans" font-weight="bold" font-style="italic" font-size="15.56" fill="#3FBDEE">m</text>
<rect x="670.2" y="287.5" width="2" height="14.5" fill="#D9574F"/><path d="M667.8,289 H674.9 L671.3,283.9 Z" fill="#D9574F"/>
<path d="M666,818.05 A10.7,10.7 0 1 0 676.7,828.75 H666 Z" fill="#3E86A0"/><circle cx="666" cy="828.75" r="3.4" fill="none" stroke="#22313A" stroke-width="1.4"/><rect x="668" y="816" width="10.5" height="13.2" fill="#313335"/><path d="M669.1,821.8 H677.9 L673.5,816.8 Z" fill="#A9B4BD"/><rect x="672" y="821.5" width="3.2" height="6" fill="#A9B4BD"/>
<circle cx="730.8" cy="536.8" r="7.6" fill="#EAA530"/><path d="M725.5,540 L736,540 L734.2,545.8 H727.3 Z" fill="#EAA530"/><rect x="726.5" y="547" width="8" height="1.8" fill="#BBBBBB"/><rect x="727.5" y="550" width="7" height="1.8" fill="#BBBBBB"/>
<rect x="757" y="533.1" width="3" height="24.7" fill="#CCCCCC" />
<rect x="735.6" y="528.5" width="368.5" height="38.7" fill="none" stroke="#F52A10" stroke-width="3.4"/>
<rect x="604" y="908" width="1811" height="35" fill="#313335" />
<text x="713.47" y="933.5" font-family="Liberation Sans" font-size="19.6" font-weight="normal" font-style="normal" fill="#BBBBBB" textLength="61.77" lengthAdjust="spacingAndGlyphs" >project</text>
<path d="M792.5,922 L797.8,927.3 L792.5,932.6" stroke="#6B6E70" stroke-width="1.3" fill="none"/>
<text x="811.39" y="933.5" font-family="Liberation Sans" font-size="19.6" font-weight="normal" font-style="normal" fill="#BBBBBB" textLength="92.00" lengthAdjust="spacingAndGlyphs" >packaging</text>
<text x="2294.41" y="941" font-family="Liberation Sans" font-size="12.6" font-weight="normal" font-style="normal" fill="#E6E6E6" textLength="103.82" lengthAdjust="spacingAndGlyphs" style="text-shadow:1px 1px 1px #000">CSDN @NAMELZX</text>
<rect x="1557.9" y="-12" width="169" height="22" rx="4.5" fill="none" stroke="#5E6062" stroke-width="1.5"/>
<rect x="1999" y="-12" width="100" height="22" rx="4.5" fill="none" stroke="#5E6062" stroke-width="1.5"/>
<text x="1599.60" y="2" font-family="Liberation Sans" font-size="19.6" font-weight="normal" font-style="normal" fill="#BBBBBB" textLength="91.95" lengthAdjust="spacingAndGlyphs" >carrierApp</text>
<text x="2008.52" y="2" font-family="Liberation Sans" font-size="19.6" font-weight="normal" font-style="normal" fill="#BBBBBB" textLength="56.52" lengthAdjust="spacingAndGlyphs" >JRebel</text>
<path d="M1530.8,1.5 L1534,-1.5 L1539.8,2.5 L1536,5 Z" fill="#4DAE4F"/>
<path d="M1570,0 h7 v2 l-5,1 Z" fill="#5E9B45"/><path d="M1574,4 l5,-1.5 v2 Z" fill="#5E9B45"/><path d="M1580.5,-3 h10 l2,5 l-2,4.5 h-10 l-2,-4.5 Z" fill="#A9B4BD"/><path d="M1583.5,-1 v3 a2,2 0 0 0 4,0 v-3" stroke="#3C3F41" stroke-width="1.2" fill="none"/>
<path d="M1748.8,0 V4 L1755.6,0 Z" fill="#4DAE4F"/>
<path d="M1784.6,0 h18.4 v2 h-5 a3.5,3.5 0 0 1 -8.4,0 h-5 Z" fill="#4DAE4F"/>
<path d="M1825,0 h8 v2 a4,3 0 0 1 -8,0 Z" fill="#AFB1B3"/><path d="M1834.3,0 V7 L1844.7,0 Z" fill="#4DAE4F"/>
<path d="M1866,0 a5,3 0 0 0 9,2.5" stroke="#AFB1B3" stroke-width="2" fill="none"/><path d="M1875,0 V7 L1886,0 Z" fill="#C75450"/>
<path d="M1930,2.5 l2,-2.5" stroke="#62B543" stroke-width="1.2"/><path d="M1934.7,0 V7 L1946,0 Z" fill="#AFB1B3"/>
<path d="M1973,0 h12.3 v2 h-2 v1.5 a4,3 0 0 1 -8.3,0 v-1.5 h-2 Z" fill="#AFB1B3"/><path d="M1969,2.5 l2,-2.5" stroke="#62B543" stroke-width="1.2"/>
<path d="M2118,7 C2118,3 2121,0 2124,0 h8 C2135,0 2138,3 2138,5 C2138,7 2136,7 2134,7 h-14 C2119,7 2118,7 2118,7 Z" fill="#5E6062"/>
<rect x="2157.3" y="0" width="15.4" height="2.5" fill="#5E6062" />
<rect x="2188.8" y="0" width="1.8" height="8.7" fill="#5E6062" />
<text x="2206.92" y="2" font-family="Liberation Sans" font-size="19.6" font-weight="normal" font-style="normal" fill="#DDDDDD" textLength="27.28" lengthAdjust="spacingAndGlyphs" >Git:</text>
<path d="M2251,0 h8.5 l2.5,2.8 h-11 Z" fill="#3592C4"/>
<path d="M2292.8,0 h5.5 l-2.75,2.4 Z" fill="#4DAE4F"/>
<circle cx="2337" cy="-3.8" r="8.3" fill="none" stroke="#AFB1B3" stroke-width="2.2"/>
<path d="M2373,3.5 h6 a3,3 0 0 0 3,-3 V0" stroke="#5E6062" stroke-width="1.8" fill="none"/>
<rect x="2400.2" y="0" width="1.8" height="8.7" fill="#5E6062" /></svg></body></html>
